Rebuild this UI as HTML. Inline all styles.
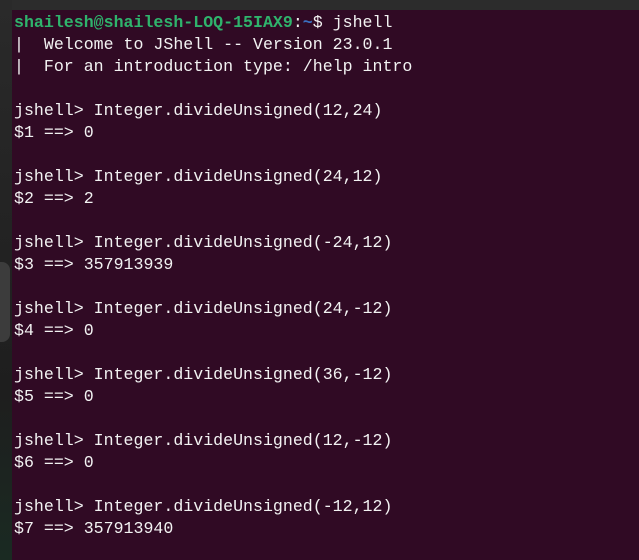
<!DOCTYPE html>
<html><head><style>
body{margin:0;width:639px;height:560px;overflow:hidden;background:#300a24;position:relative}
.top{position:absolute;left:0;top:0;width:639px;height:10px;background:#2c2c2c}
.left{position:absolute;left:0;top:0;width:12px;height:560px;background:linear-gradient(#2a2a2a,#1e1e1e 70%,#1a2a22)}
.dock{position:absolute;left:0;top:262px;width:10px;height:80px;background:#3c3c3c;border-radius:0 8px 8px 0}
pre{position:absolute;left:14px;top:12px;margin:0;font-family:"Liberation Mono",monospace;font-size:16.6px;line-height:22px;color:#f2f2f2}
.g{color:#2fb36c;font-weight:bold}.b{color:#3a6fc0;font-weight:bold}
</style></head><body>
<div class="top"></div><div class="left"></div><div class="dock"></div>
<pre><span class="g">shailesh@shailesh-LOQ-15IAX9</span>:<span class="b">~</span>$ jshell
|  Welcome to JShell -- Version 23.0.1
|  For an introduction type: /help intro

jshell&gt; Integer.divideUnsigned(12,24)
$1 ==&gt; 0

jshell&gt; Integer.divideUnsigned(24,12)
$2 ==&gt; 2

jshell&gt; Integer.divideUnsigned(-24,12)
$3 ==&gt; 357913939

jshell&gt; Integer.divideUnsigned(24,-12)
$4 ==&gt; 0

jshell&gt; Integer.divideUnsigned(36,-12)
$5 ==&gt; 0

jshell&gt; Integer.divideUnsigned(12,-12)
$6 ==&gt; 0

jshell&gt; Integer.divideUnsigned(-12,12)
$7 ==&gt; 357913940</pre>
</body></html>
